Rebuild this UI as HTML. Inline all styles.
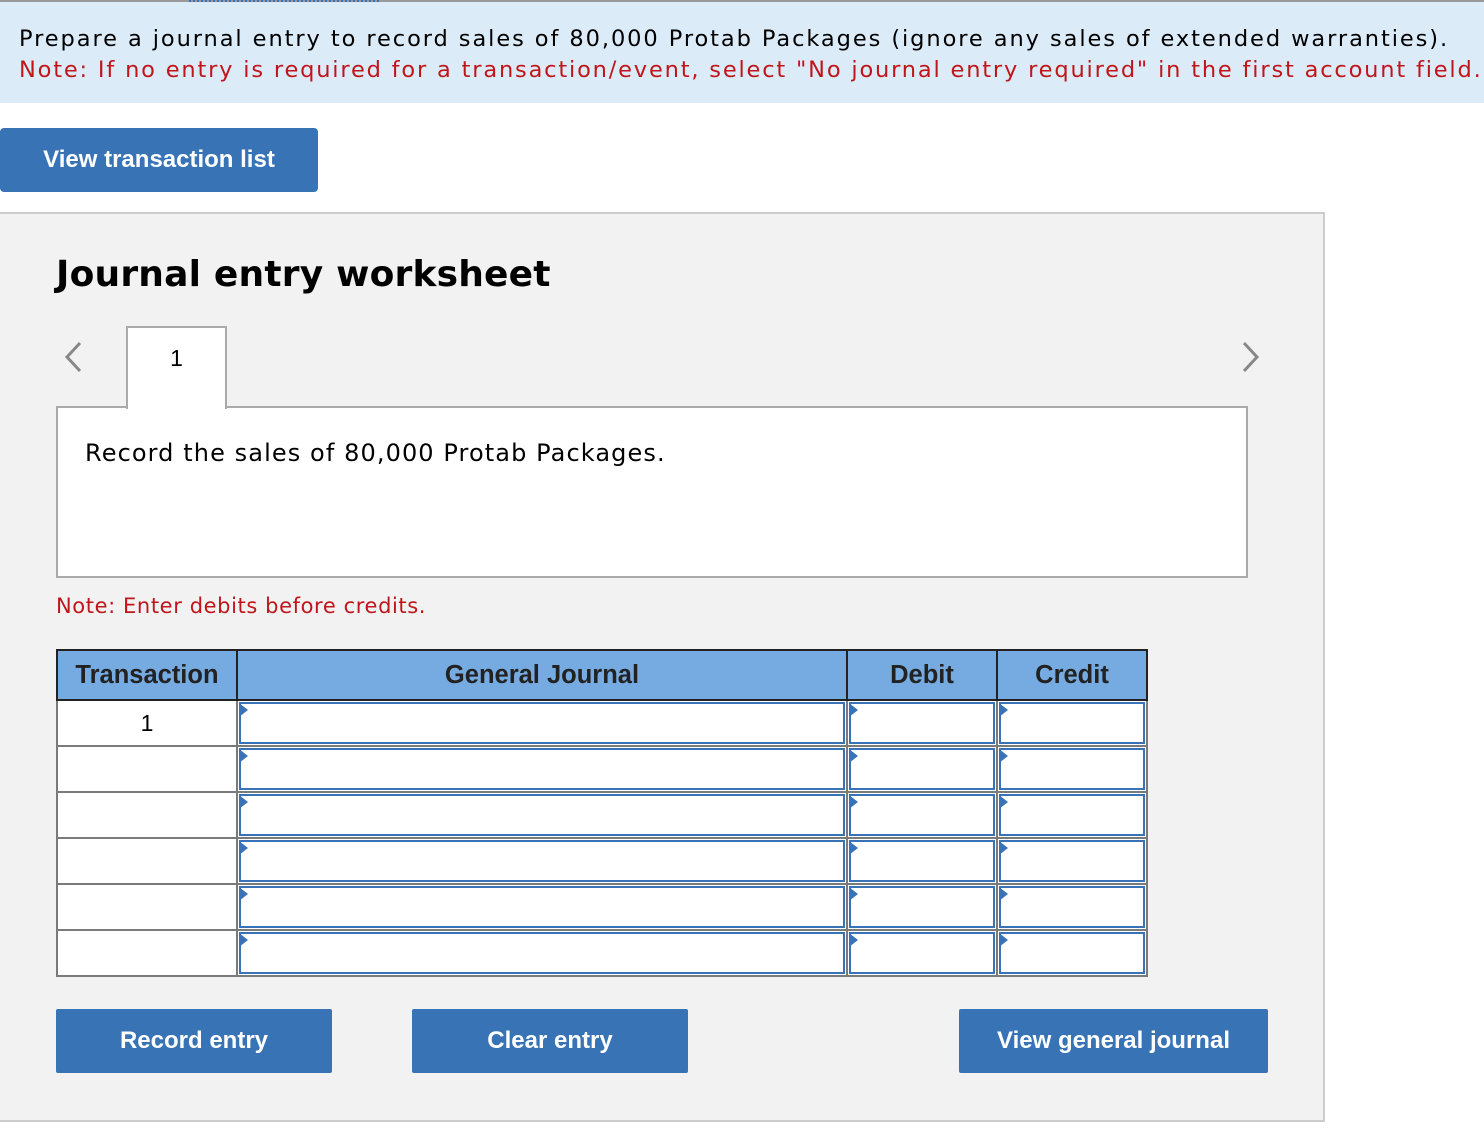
<!DOCTYPE html>
<html><head><style>
body{margin:0;width:1484px;height:1130px;background:#fff;position:relative;overflow:hidden;font-family:"DejaVu Sans","Liberation Sans",sans-serif;}
.banner{position:absolute;left:0;top:0;width:1484px;height:103px;background:#dcebf8;border-top:2px solid #999;box-sizing:border-box;}
.banner .dots{position:absolute;left:189px;top:-2px;width:190px;border-top:2px dotted #3a72b8;}
.banner p{margin:0;position:absolute;left:19px;font-size:22.5px;white-space:nowrap;}
.btn{position:absolute;background:#3773b5;color:#fff;font-family:"Liberation Sans",sans-serif;font-weight:bold;font-size:24px;display:flex;align-items:center;justify-content:center;border-radius:4px;}
.panel{position:absolute;left:-2px;top:212px;width:1327px;height:910px;background:#f2f2f2;border:2px solid #ccc;box-sizing:border-box;}
h1{position:absolute;left:56px;top:254px;margin:0;font-size:36px;font-weight:bold;font-family:"DejaVu Sans",sans-serif;letter-spacing:0.2px}
.tab{position:absolute;left:126px;top:326px;width:101px;height:83px;background:#fff;border:2px solid #aaa;border-bottom:none;box-sizing:border-box;text-align:center;font-size:23px;line-height:60px;font-family:"Liberation Sans",sans-serif;z-index:2}
.box{position:absolute;left:56px;top:406px;width:1192px;height:172px;background:#fff;border:2px solid #aaa;box-sizing:border-box;}
.box p{margin:0;position:absolute;left:27px;top:31px;font-size:24px;letter-spacing:1.1px}
.note{position:absolute;left:56px;top:594px;color:#c0161b;font-size:21px;letter-spacing:0.6px}
table{position:absolute;left:56px;top:649px;border-collapse:collapse;font-family:"Liberation Sans",sans-serif;}
th{background:#76abe2;height:48px;font-size:25.5px;color:#222;border:2px solid #222;padding:0}
td{height:44px;border:2px solid #7a7a7a;padding:0;background:#fff;position:relative}
td.in div{position:absolute;left:1px;top:1px;right:1px;bottom:1px;border:2px solid #3a72b8;}
td.in div:before{content:"";position:absolute;left:-2px;top:-1px;border-left:9px solid #3a72b8;border-top:7px solid transparent;border-bottom:7px solid transparent;}
</style></head><body>
<div class="banner"><div class="dots"></div>
<p style="top:24px;letter-spacing:1.92px">Prepare a journal entry to record sales of 80,000 Protab Packages (ignore any sales of extended warranties).</p>
<p style="top:55px;color:#c0161b;letter-spacing:1.82px">Note: If no entry is required for a transaction/event, select "No journal entry required" in the first account field.</p></div>
<div class="btn" style="left:0;top:128px;width:318px;height:64px;">View transaction list</div>
<div class="panel"></div>
<h1>Journal entry worksheet</h1>
<svg style="position:absolute;left:60px;top:340px" width="26" height="34"><path d="M20 3 L7 17 L20 31" stroke="#888" stroke-width="3" fill="none"/></svg>
<svg style="position:absolute;left:1238px;top:340px" width="26" height="34"><path d="M6 3 L19 17 L6 31" stroke="#888" stroke-width="3" fill="none"/></svg>
<div class="tab">1</div>
<div class="box"><p>Record the sales of 80,000 Protab Packages.</p></div>
<div class="note">Note: Enter debits before credits.</div>
<table>
<tr><th style="width:178px">Transaction</th><th style="width:608px">General Journal</th><th style="width:148px">Debit</th><th style="width:148px">Credit</th></tr>
<tr><td style="text-align:center;font-size:23px">1</td><td class="in"><div></div></td><td class="in"><div></div></td><td class="in"><div></div></td></tr>
<tr><td></td><td class="in"><div></div></td><td class="in"><div></div></td><td class="in"><div></div></td></tr>
<tr><td></td><td class="in"><div></div></td><td class="in"><div></div></td><td class="in"><div></div></td></tr>
<tr><td></td><td class="in"><div></div></td><td class="in"><div></div></td><td class="in"><div></div></td></tr>
<tr><td></td><td class="in"><div></div></td><td class="in"><div></div></td><td class="in"><div></div></td></tr>
<tr><td></td><td class="in"><div></div></td><td class="in"><div></div></td><td class="in"><div></div></td></tr>
</table>
<div class="btn" style="left:56px;top:1009px;width:276px;height:64px;border-radius:2px">Record entry</div>
<div class="btn" style="left:412px;top:1009px;width:276px;height:64px;border-radius:2px">Clear entry</div>
<div class="btn" style="left:959px;top:1009px;width:309px;height:64px;border-radius:2px">View general journal</div>
</body></html>
